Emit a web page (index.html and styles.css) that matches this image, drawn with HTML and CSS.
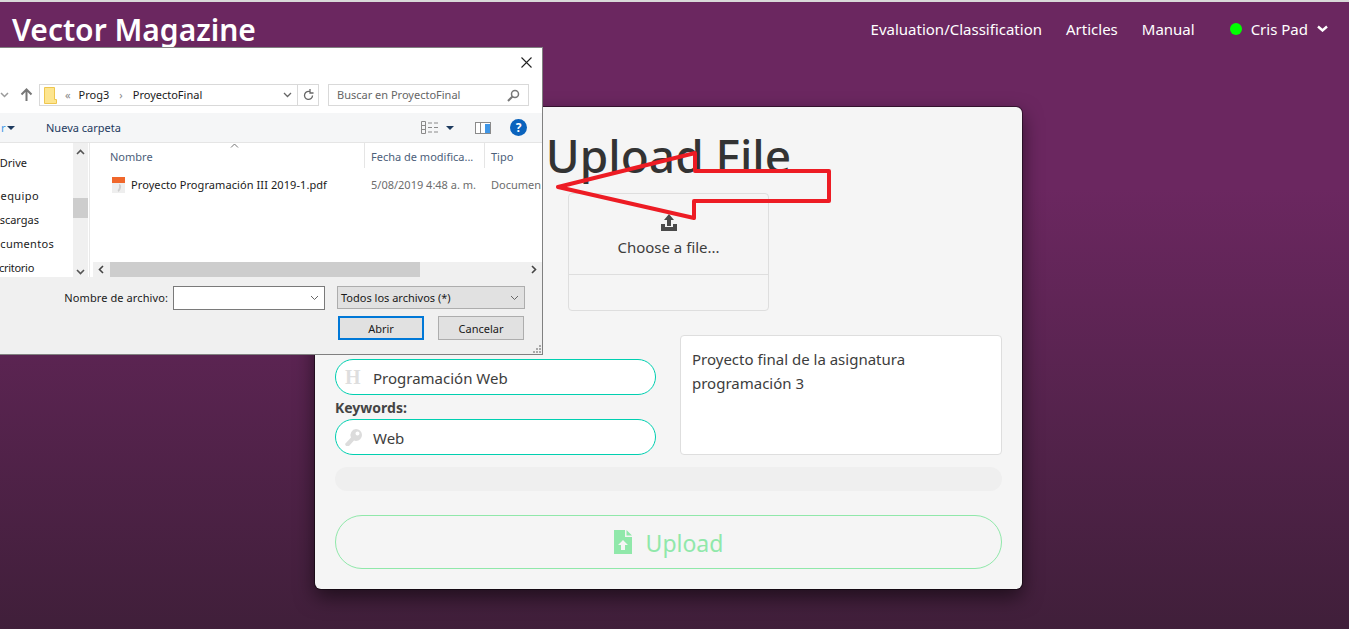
FILE: index.html
```html
<!DOCTYPE html>
<html>
<head>
<meta http-equiv="Content-Type" content="text/html; charset=utf-8"/>
<title>Vector Magazine</title>
<link rel="stylesheet" href="styles.css">
</head>
<body>

<header class="topbar">
  <a class="brand">Vector Magazine</a>
  <nav class="menu">
    <a>Evaluation/Classification</a>
    <a>Articles</a>
    <a>Manual</a>
    <a class="user">
      <span class="dot"></span>
      <span>Cris Pad</span>
      <svg class="chev" width="11" height="7" viewBox="0 0 11 7"><path d="M1 1.500l4.500 4 4.500-4" fill="none" stroke="#fff" stroke-width="2.400"/></svg>
    </a>
  </nav>
</header>

<main class="card">
  <h1 class="card-title">Upload File</h1>

  <div class="dropbox">
    <div class="dropbox-top">
      <svg class="open-icon" width="18" height="17" viewBox="0 0 18 17"><path d="M9 0l5 6h-3v6H7V6H4z" fill="#4a4a4a"/><path d="M1 10h4v3h8v-3h4v7H1z" fill="#4a4a4a"/></svg>
      <span>Choose a file...</span>
    </div>
    <div class="dropbox-bottom"></div>
  </div>

  <div class="fields">
    <div class="fields-left">
      <label class="field-label">Title:</label>
      <div class="pill">
        <span class="pill-h">H</span>
        <span>Programación Web</span>
      </div>
      <label class="field-label">Keywords:</label>
      <div class="pill">
        <svg class="pill-icon" width="17" height="17" viewBox="0 0 17 17"><path d="M11 0a6 6 0 0 1 0 12 6 6 0 0 1-2-.4L4 17H1l-1-2 6-6.500A6 6 0 0 1 11 0zm1.500 2.500a2 2 0 1 0 0 4 2 2 0 0 0 0-4z" fill="#dcdcdc" fill-rule="evenodd"/></svg>
        <span>Web</span>
      </div>
    </div>
    <div class="description">Proyecto final de la asignatura programación 3</div>
  </div>

  <div class="progress"></div>

  <button class="upload-btn">
    <svg width="18" height="24" viewBox="0 0 18 24"><path d="M0 0h11v7h7v17H0z" fill="#90e8aa"/><path d="M12.500 0L18 5.500h-5.500z" fill="#90e8aa"/><path d="M9 10l5 5h-3v5H7v-5H4z" fill="#f5f5f5"/></svg>
    <span class="upload-text">Upload</span>
  </button>
</main>

<!-- windows file dialog, sits over the page and runs off the left edge -->
<div class="dialog">
  <div class="dlg-titlebar">
    <svg width="11" height="11" viewBox="0 0 11 11"><path d="M.5.500l10 10M10.500.500l-10 10" stroke="#222" stroke-width="1.100"/></svg>
  </div>

  <div class="dlg-nav">
    <svg class="nav-down" width="9" height="6" viewBox="0 0 9 6"><path d="M1 1l3.500 3.500L8 1" fill="none" stroke="#9a9a9a" stroke-width="1.500"/></svg>
    <svg class="nav-up" width="13" height="14" viewBox="0 0 13 14"><path d="M6.500 13V2M1.500 6.500l5-5 5 5" fill="none" stroke="#777" stroke-width="2"/></svg>
    <div class="address">
      <svg class="folder" width="13" height="17" viewBox="0 0 13 17"><path d="M.5.500h10v12h2v4H.5z" fill="#fde58f" stroke="#eec64f"/></svg>
      <span class="crumb-more">«</span>
      <span>Prog3</span>
      <span class="crumb-sep">›</span>
      <span>ProyectoFinal</span>
      <span class="address-end">
        <svg width="9" height="6" viewBox="0 0 9 6"><path d="M1 1l3.500 3.500L8 1" fill="none" stroke="#666" stroke-width="1.300"/></svg>
        <i class="address-div"></i>
        <svg width="11" height="12" viewBox="0 0 11 12"><path d="M9.500 6.500a4 4 0 1 1-2-3.500M7 0v4h3.500" fill="none" stroke="#666" stroke-width="1.300"/></svg>
      </span>
    </div>
    <div class="searchbox">
      <span>Buscar en ProyectoFinal</span>
      <svg width="13" height="13" viewBox="0 0 13 13"><circle cx="8" cy="5" r="3.500" fill="none" stroke="#777" stroke-width="1.500"/><path d="M5.500 7.500L1 12" stroke="#777" stroke-width="2"/></svg>
    </div>
  </div>

  <div class="dlg-tools">
    <span class="tool-left">r</span>
    <i class="caret"></i>
    <span class="new-folder">Nueva carpeta</span>
    <span class="tools-end">
      <svg width="17" height="13" viewBox="0 0 17 13"><path d="M.5.500h4v12h-4zM.5 4.500h4M.5 8.500h4M7 2h4M13 2h4M7 6.500h4M13 6.500h4M7 11h4M13 11h4" fill="none" stroke="#8a8a8a"/></svg>
      <i class="caret caret-views"></i>
      <svg class="pane-icon" width="16" height="12" viewBox="0 0 16 12"><rect x=".5" y=".5" width="15" height="11" fill="#fff" stroke="#8a8a8a"/><rect x="5" y="1" width="1" height="10" fill="#8a8a8a"/><rect x="10" y="2" width="5" height="9" fill="#3f96e6"/></svg>
      <span class="help">?</span>
    </span>
  </div>

  <div class="dlg-main">
    <div class="tree">
      <div class="tree-list">
        <span class="tree-drive">Drive</span>
        <span class="tree-pc">equipo</span>
        <span class="tree-dl">scargas</span>
        <span class="tree-docs">cumentos</span>
        <span class="tree-desk">critorio</span>
      </div>
      <div class="tree-scroll">
        <svg width="9" height="6" viewBox="0 0 9 6"><path d="M1 5l3.500-3.500L8 5" fill="none" stroke="#555" stroke-width="1.600"/></svg>
        <i class="tree-thumb"></i>
        <svg width="9" height="6" viewBox="0 0 9 6"><path d="M1 1l3.500 3.500L8 1" fill="none" stroke="#555" stroke-width="1.600"/></svg>
      </div>
    </div>
    <div class="files">
      <div class="files-head">
        <span class="col-name">Nombre<svg class="sort" width="9" height="5" viewBox="0 0 9 5"><path d="M1 4.500L4.500 1 8 4.500" fill="none" stroke="#777"/></svg></span>
        <span class="col-date">Fecha de modifica...</span>
        <span class="col-type">Tipo</span>
      </div>
      <div class="file-row">
        <svg class="pdf" width="13" height="16" viewBox="0 0 13 16"><rect width="13" height="16" fill="#eee"/><rect width="13" height="6" fill="#f0672b"/><path d="M7 8c2 0 1 5-1 6" fill="none" stroke="#cfcfcf" stroke-width="2"/></svg>
        <span class="file-name">Proyecto Programación III 2019-1.pdf</span>
        <span class="file-date">5/08/2019 4:48 a. m.</span>
        <span class="file-type">Documen</span>
      </div>
      <div class="hscroll">
        <svg width="6" height="9" viewBox="0 0 6 9"><path d="M5 1L1.500 4.500 5 8" fill="none" stroke="#444" stroke-width="1.600"/></svg>
        <i class="hscroll-track"><i class="hscroll-thumb"></i></i>
        <svg width="6" height="9" viewBox="0 0 6 9"><path d="M1 1l3.500 3.500L1 8" fill="none" stroke="#444" stroke-width="1.600"/></svg>
      </div>
    </div>
  </div>

  <div class="dlg-bottom">
    <div class="dlg-row">
      <label>Nombre de archivo:</label>
      <div class="name-box">
        <svg width="9" height="6" viewBox="0 0 9 6"><path d="M1 1l3.500 3.500L8 1" fill="none" stroke="#666"/></svg>
      </div>
      <div class="type-box">
        <span>Todos los archivos (*)</span>
        <svg width="9" height="6" viewBox="0 0 9 6"><path d="M1 1l3.500 3.500L8 1" fill="none" stroke="#666"/></svg>
      </div>
    </div>
    <div class="dlg-row dlg-buttons">
      <button class="dlg-btn dlg-btn-main">Abrir</button>
      <button class="dlg-btn">Cancelar</button>
    </div>
    <svg class="grip" width="9" height="9" viewBox="0 0 9 9"><path d="M7 1h2v2H7zM4 4h2v2H4zM7 4h2v2H7zM1 7h2v2H1zM4 7h2v2H4zM7 7h2v2H7z" fill="#a8a8a8"/></svg>
  </div>
</div>

<!-- hand drawn red arrow on top of the screenshot -->
<svg class="arrow" width="290" height="80" viewBox="550 148 290 80">
  <path d="M695 153L558 187l136 31v-17h135v-30H695z" fill="none" stroke="#ed1c24" stroke-width="4" stroke-linejoin="round"/>
</svg>

</body>
</html>
```

FILE: styles.css
```css
html, body {
  height: 100%;
}

body {
  margin: 0;
  overflow: hidden;
  border-top: 2px solid #d9d9d9;
  box-sizing: border-box;
  font-family: "Noto Sans", sans-serif;
  font-size: 15px;
  color: #3d3d3d;
  background: linear-gradient(#6b2760 0%, #6b2760 30%, #401f3a 100%);
}

/* top bar */

.topbar {
  display: flex;
  justify-content: space-between;
  align-items: center;
  height: 54px;
  padding: 0 21px 0 12px;
  color: #fff;
}

.brand {
  font-size: 30px;
  font-weight: 600;
}

.menu {
  display: flex;
  align-items: center;
  gap: 24px;
}

.user {
  display: flex;
  align-items: center;
  margin-left: 11px;
}

.dot {
  width: 12px;
  height: 12px;
  margin-right: 9px;
  border-radius: 50%;
  background: #00ff00;
}

.chev {
  margin-left: 9px;
  margin-bottom: 2px;
}

/* upload card */

.card {
  width: 667px;
  height: 482px;
  margin: 51px 0 0 315px;
  padding: 0 20px;
  background: #f5f5f5;
  border-radius: 6px;
  box-shadow: 0 0 0 1px rgba(0, 0, 0, .45), 0 8px 20px rgba(0, 0, 0, .55);
}

.card-title {
  margin: 0;
  padding-top: 17px;
  height: 69px;
  text-align: center;
  font-size: 46px;
  line-height: 62px;
  font-weight: 500;
  color: #333;
}

.dropbox {
  width: 199px;
  height: 116px;
  margin-left: 233px;
  border: 1px solid #dedede;
  border-radius: 4px;
}

.dropbox-top {
  display: flex;
  flex-direction: column;
  align-items: center;
  height: 81px;
  padding-top: 20px;
  box-sizing: border-box;
  border-bottom: 1px solid #dedede;
}

.open-icon {
  margin-bottom: 6px;
}

.fields {
  display: grid;
  grid-template-columns: 321px 322px;
  justify-content: space-between;
  margin-top: 24px;
}

.field-label {
  display: block;
  height: 24px;
  line-height: 26px;
  font-size: 14px;
  font-weight: 700;
  color: #444;
}

.pill {
  display: flex;
  align-items: center;
  gap: 14px;
  height: 36px;
  padding: 2px 0 0 9px;
  box-sizing: border-box;
  background: #fff;
  border: 1px solid #00cfb0;
  border-radius: 18px;
}

.pill-h {
  width: 14px;
  margin-top: -2px;
  text-align: center;
  font-family: "Liberation Serif", serif;
  font-size: 20px;
  font-weight: 700;
  color: #dedede;
}

.pill-icon {
  margin: -2px -3px 0 0;
}

.description {
  height: 120px;
  padding: 11px;
  box-sizing: border-box;
  line-height: 24px;
  background: #fff;
  border: 1px solid #dedede;
  border-radius: 4px;
}

.progress {
  height: 24px;
  margin-top: 12px;
  background: #efefef;
  border-radius: 12px;
}

.upload-btn {
  display: flex;
  justify-content: center;
  align-items: center;
  gap: 14px;
  width: 100%;
  height: 54px;
  margin-top: 24px;
  background: transparent;
  border: 1px solid #90e8aa;
  border-radius: 27px;
  font-family: inherit;
  font-size: 23px;
  color: #90e8aa;
}

.upload-text {
  padding-top: 2px;
}

/* file dialog */

.dialog {
  position: absolute;
  left: -100px;
  top: 47px;
  width: 641px;
  height: 306px;
  background: #fff;
  border: 1px solid #808080;
  font-size: 11px;
  color: #1a1a1a;
}

.dlg-titlebar {
  display: flex;
  justify-content: flex-end;
  align-items: center;
  height: 28px;
  padding-right: 10px;
}

.dlg-nav {
  display: flex;
  align-items: center;
  height: 22px;
  margin-top: 8px;
  padding-left: 99px;
}

.nav-up {
  margin-left: 11px;
}

.address {
  display: flex;
  align-items: center;
  gap: 8px;
  width: 280px;
  height: 22px;
  margin-left: 6px;
  padding-left: 4px;
  box-sizing: border-box;
  border: 1px solid #d9d9d9;
}

.address > span:not(.address-end) {
  padding-bottom: 2px;
}

.crumb-sep {
  margin: 0 2px;
}

.crumb-more, .crumb-sep {
  color: #888;
}

.address-end {
  display: flex;
  align-items: center;
  gap: 5px;
  height: 100%;
  margin-left: auto;
  padding-right: 4px;
}

.address-div {
  width: 1px;
  height: 100%;
  background: #d9d9d9;
}

.searchbox {
  display: flex;
  justify-content: space-between;
  align-items: center;
  width: 201px;
  height: 22px;
  margin-left: 9px;
  padding: 0 8px;
  box-sizing: border-box;
  border: 1px solid #d9d9d9;
  color: #666;
}

.searchbox span {
  padding-bottom: 2px;
}

.dlg-tools {
  display: flex;
  align-items: center;
  height: 29px;
  margin-top: 7px;
  padding: 0 15px 0 100px;
  background: #f5f6f7;
  border-bottom: 1px solid #e5e5e5;
  color: #1d3a5f;
}

.tool-left {
  width: 4px;
  margin-right: 2px;
  color: #3f96e6;
}

.caret {
  width: 0;
  height: 0;
  border: 4px solid transparent;
  border-top: 4px solid #1d3a5f;
  border-bottom: 0;
}

.new-folder {
  margin-left: 31px;
}

.tools-end {
  display: flex;
  align-items: center;
  margin-left: auto;
}

.caret-views {
  margin-left: 8px;
}

.pane-icon {
  margin-left: 21px;
}

.help {
  width: 17px;
  height: 17px;
  margin-left: 19px;
  border-radius: 50%;
  background: #0a63bd;
  color: #fff;
  font-size: 12px;
  font-weight: 700;
  line-height: 17px;
  text-align: center;
}

.dlg-main {
  display: flex;
  height: 134px;
}

.tree {
  display: flex;
  flex: none;
  width: 188px;
  border-right: 1px solid #e9e9e9;
}

.tree-list {
  display: flex;
  flex-direction: column;
  width: 172px;
  padding-top: 12px;
  box-sizing: border-box;
  overflow: hidden;
  text-align: right;
}

.tree-list span {
  flex: none;
  height: 24px;
  line-height: 16px;
}

.tree-list .tree-drive {
  height: 33px;
  padding-right: 46px;
}

.tree-list .tree-pc {
  padding-right: 34px;
  letter-spacing: .4px;
}

.tree-list .tree-dl {
  padding-right: 34px;
}

.tree-list .tree-docs {
  padding-right: 19px;
  letter-spacing: .3px;
}

.tree-list .tree-desk {
  padding-right: 39px;
  letter-spacing: -.3px;
}

.tree-scroll {
  display: flex;
  flex-direction: column;
  align-items: center;
  justify-content: space-between;
  width: 15px;
  padding: 6px 0 2px;
  box-sizing: border-box;
  background: #f0f0f0;
}

.tree-thumb {
  display: block;
  width: 15px;
  height: 20px;
  margin-top: 43px;
  margin-bottom: auto;
  background: #cdcdcd;
}

.files {
  position: relative;
  flex: 1;
  min-width: 0;
  overflow: hidden;
}

.files-head {
  display: flex;
  height: 25px;
  line-height: 28px;
  color: #4c607a;
}

.col-name {
  position: relative;
  width: 254px;
  padding-left: 20px;
  border-right: 1px solid #e5e5e5;
}

.sort {
  position: absolute;
  left: 140px;
  top: 0;
}

.col-date {
  width: 113px;
  padding-left: 6px;
  border-right: 1px solid #e5e5e5;
}

.col-type {
  padding-left: 6px;
}

.file-row {
  display: flex;
  align-items: center;
  height: 33px;
  padding-left: 22px;
  white-space: nowrap;
}

.file-name {
  width: 240px;
  margin-left: 6px;
  letter-spacing: .08px;
}

.file-date {
  width: 120px;
  color: #6d6d6d;
}

.file-type {
  color: #6d6d6d;
}

.hscroll {
  position: absolute;
  left: 3px;
  right: 0;
  bottom: 0;
  display: flex;
  align-items: center;
  justify-content: space-between;
  height: 15px;
  padding: 0 5px;
  background: #f0f0f0;
}

.hscroll-track {
  flex: 1;
  height: 15px;
  margin: 0 6px;
}

.hscroll-thumb {
  display: block;
  width: 310px;
  height: 15px;
  background: #cdcdcd;
}

.dlg-bottom {
  position: relative;
  height: 77px;
  padding: 9px 17px 0 0;
  box-sizing: border-box;
  background: #f0f0f0;
}

.dlg-row {
  display: flex;
  justify-content: flex-end;
  align-items: flex-start;
}

.dlg-row label {
  margin-right: 5px;
  line-height: 24px;
  letter-spacing: .1px;
}

.name-box, .type-box {
  display: flex;
  justify-content: flex-end;
  align-items: center;
  box-sizing: border-box;
  padding-right: 5px;
  border: 1px solid #7a7a7a;
}

.name-box {
  width: 152px;
  height: 24px;
  background: #fff;
}

.type-box {
  justify-content: space-between;
  width: 188px;
  height: 23px;
  margin-left: 12px;
  padding-left: 3px;
  background: #e1e1e1;
  border-color: #adadad;
}

.dlg-buttons {
  gap: 14px;
  margin-top: 6px;
  padding-right: 1px;
}

.dlg-btn {
  width: 86px;
  height: 24px;
  padding: 0;
  background: #e1e1e1;
  border: 1px solid #adadad;
  font-family: inherit;
  font-size: 11px;
  color: #1a1a1a;
}

.dlg-btn-main {
  border: 2px solid #0078d7;
}

.grip {
  position: absolute;
  right: 1px;
  bottom: 1px;
}

.arrow {
  position: absolute;
  left: 550px;
  top: 148px;
}
```
